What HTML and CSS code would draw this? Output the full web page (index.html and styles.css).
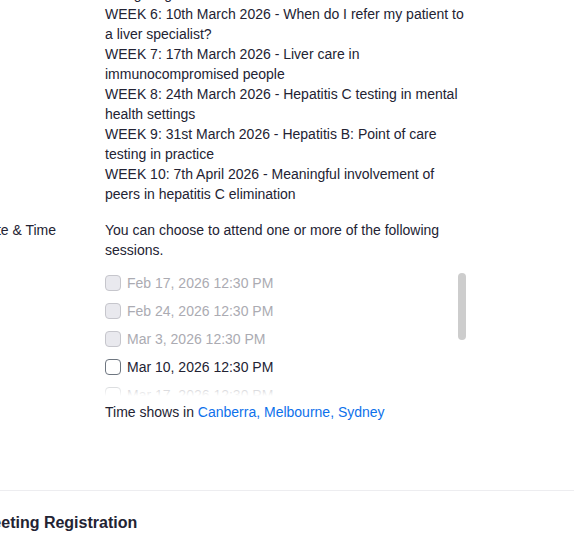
FILE: index.html
```html
<!DOCTYPE html>
<html lang="en">
<head>
<meta charset="utf-8">
<title>Webinar Registration</title>
<link rel="stylesheet" href="styles.css">
</head>
<body>
<div class="page">
  <section class="info">
    <div class="row">
      <div class="label"></div>
      <div class="content">
        Living longer<br>
        WEEK 6: 10th March 2026 - When do I refer my patient to a liver specialist?<br>
        WEEK 7: 17th March 2026 - Liver care in immunocompromised people<br>
        WEEK 8: 24th March 2026 - Hepatitis C testing in mental health settings<br>
        WEEK 9: 31st March 2026 - Hepatitis B: Point of care testing in practice<br>
        WEEK 10: 7th April 2026 - Meaningful involvement of peers in hepatitis C elimination
      </div>
    </div>
    <div class="row">
      <div class="label">Date &amp; Time</div>
      <div class="content">
        <p class="intro">You can choose to attend one or more of the following sessions.</p>
        <div class="sessions-wrap">
          <ul class="sessions">
            <li class="session is-past"><input type="checkbox" class="cb" disabled><span>Feb 17, 2026 12:30 PM</span></li>
            <li class="session is-past"><input type="checkbox" class="cb" disabled><span>Feb 24, 2026 12:30 PM</span></li>
            <li class="session is-past"><input type="checkbox" class="cb" disabled><span>Mar 3, 2026 12:30 PM</span></li>
            <li class="session"><input type="checkbox" class="cb"><span>Mar 10, 2026 12:30 PM</span></li>
            <li class="session"><input type="checkbox" class="cb"><span>Mar 17, 2026 12:30 PM</span></li>
            <li class="session"><input type="checkbox" class="cb"><span>Mar 24, 2026 12:30 PM</span></li>
            <li class="session"><input type="checkbox" class="cb"><span>Mar 31, 2026 12:30 PM</span></li>
            <li class="session"><input type="checkbox" class="cb"><span>Apr 7, 2026 12:30 PM</span></li>
          </ul>
          <span class="scroll-thumb" aria-hidden="true"></span>
        </div>
        <p class="tz">Time shows in <a href="#">Canberra, Melbourne, Sydney</a></p>
      </div>
    </div>
  </section>
  <section class="registration">
    <h2 class="reg-title">Meeting Registration</h2>
  </section>
</div>
</body>
</html>
```

FILE: styles.css
```css
* { box-sizing: border-box; }

html, body {
  margin: 0;
  padding: 0;
  background: #ffffff;
  overflow: hidden;
}

body {
  font-family: "Liberation Sans", Arial, sans-serif;
  font-size: 14px;
  line-height: 20px;
  color: #232333;
}

.page {
  margin-top: -16px;
  margin-left: -21px;
}

.row {
  display: flex;
  margin-bottom: 16px;
}

.label {
  width: 126px;
  flex: none;
}

.content {
  width: 364px;
  flex: none;
}

.intro {
  margin: 0 0 13px;
}

.sessions-wrap {
  position: relative;
  width: 361px;
}

.sessions-wrap::after {
  content: "";
  position: absolute;
  left: 0;
  right: 10px;
  bottom: 0;
  height: 14px;
  background: linear-gradient(rgba(255, 255, 255, 0.6), #ffffff);
  pointer-events: none;
}

.sessions {
  list-style: none;
  margin: 0;
  padding: 0 0 6px 1px;
  height: 123px;
  overflow-y: auto;
  scrollbar-width: none;
}

.sessions::-webkit-scrollbar {
  display: none;
}

.scroll-thumb {
  position: absolute;
  top: 0;
  right: 0;
  width: 8px;
  height: 67px;
  border-radius: 4px;
  background: #cdcdcd;
}

.session {
  display: flex;
  align-items: center;
  gap: 6px;
  height: 20px;
  margin-bottom: 8px;
  margin-left: -1px;
}

.cb {
  appearance: none;
  -webkit-appearance: none;
  margin: 0;
  width: 16px;
  height: 16px;
  border: 1px solid #6e7680;
  border-radius: 4px;
  background: #ffffff;
  flex: none;
}

.cb:disabled {
  background: #e9e9ee;
  border-color: #c6c6cc;
}

.is-past span {
  color: #ababb2;
}

.tz {
  margin: 6px 0 0;
}

.tz a {
  color: #0e71eb;
  text-decoration: none;
}

.registration {
  margin-top: 68px;
  border-top: 1px solid #ededf0;
  padding-top: 20px;
}

.reg-title {
  margin: 0;
  font-size: 16px;
  line-height: 24px;
  font-weight: 700;
  color: #232333;
}
```
